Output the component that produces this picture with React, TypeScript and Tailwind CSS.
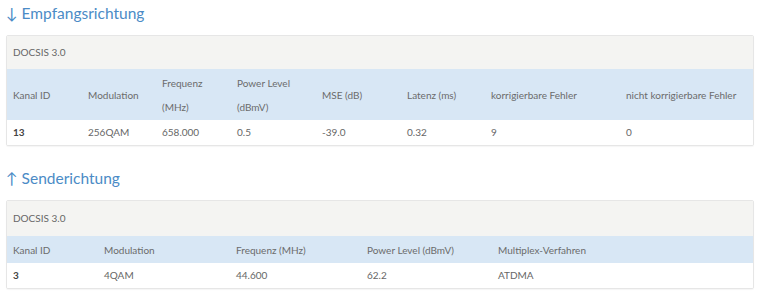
import React from 'react';

type Section = {
  arrow: string;
  title: string;
  cols: string;
  headers: React.ReactNode[];
  row: string[];
  topRow: string;
  headRow: string;
};

const sections: Section[] = [
  {
    arrow: '↓',
    title: 'Empfangsrichtung',
    cols: 'grid-cols-[75px_74px_75px_85px_85px_84px_135px_1fr]',
    headers: [
      'Kanal ID',
      'Modulation',
      <>Frequenz<br />(MHz)</>,
      <>Power Level<br />(dBmV)</>,
      'MSE (dB)',
      'Latenz (ms)',
      'korrigierbare Fehler',
      'nicht korrigierbare Fehler',
    ],
    row: ['13', '256QAM', '658.000', '0.5', '-39.0', '0.32', '9', '0'],
    topRow: 'h-[33px]',
    headRow: 'h-[51px]',
  },
  {
    arrow: '↑',
    title: 'Senderichtung',
    cols: 'grid-cols-[91px_132px_131px_131px_1fr]',
    headers: ['Kanal ID', 'Modulation', 'Frequenz (MHz)', 'Power Level (dBmV)', 'Multiplex-Verfahren'],
    row: ['3', '4QAM', '44.600', '62.2', 'ATDMA'],
    topRow: 'h-[35px]',
    headRow: 'h-[27px]',
  },
];

function ChannelTable({ s }: { s: Section }) {
  return (
    <div className="flex flex-col">
      <h2 className="text-[15.5px] leading-[22px] text-[#4b8bc6] h-[33px] pl-[6px]">
        {s.arrow} {s.title}
      </h2>
      <div className="mx-[6px] border border-[#e6e6e6] rounded-[2px] shadow-[0_1px_1px_rgba(0,0,0,0.04)] overflow-hidden">
        <div className={`bg-[#f4f4f2] ${s.topRow} flex items-center px-[6px] text-[10px] text-[#666]`}>DOCSIS 3.0</div>
        <div className={`grid ${s.cols} bg-[#d8e7f5] ${s.headRow} items-center px-[6px] text-[10px] text-[#6b6b6b] leading-[24px]`}>
          {s.headers.map((h, i) => (
            <div key={i}>{h}</div>
          ))}
        </div>
        <div className={`grid ${s.cols} bg-white h-[25px] items-center px-[6px] text-[10px] text-[#666]`}>
          {s.row.map((v, i) => (
            <div key={i} className={i === 0 ? 'font-bold text-[#444]' : ''}>{v}</div>
          ))}
        </div>
      </div>
    </div>
  );
}

export default function App() {
  return (
    <div className="w-[760px] h-[300px] bg-white font-['Lato',sans-serif] pt-[2px] flex flex-col gap-[21px]">
      {sections.map((s) => (
        <ChannelTable key={s.title} s={s} />
      ))}
    </div>
  );
}
